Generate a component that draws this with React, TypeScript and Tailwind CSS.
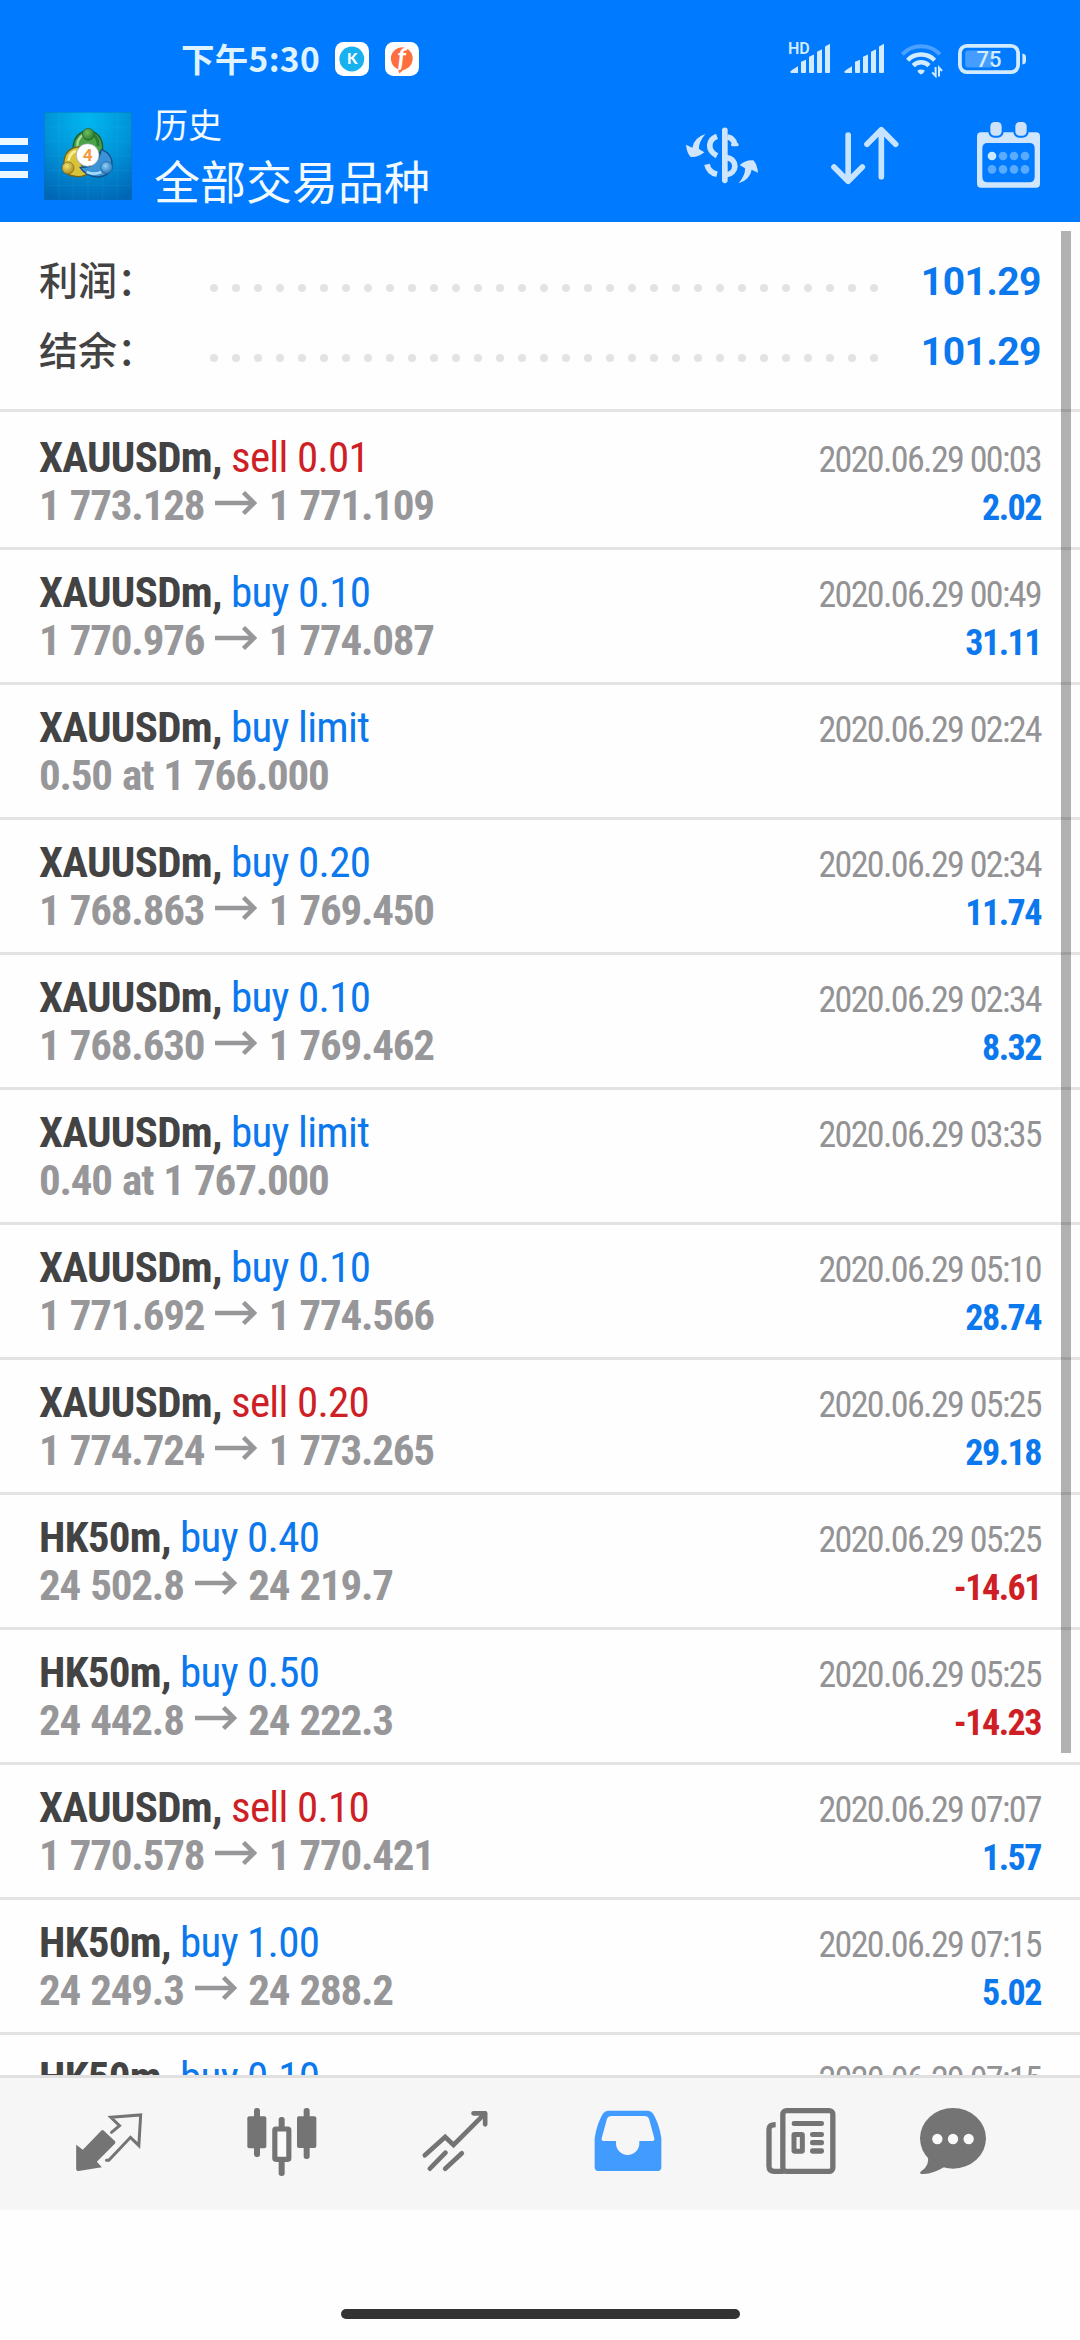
import React from "react";
import clsx from "clsx";

type Deal = {
  symbol: string;
  side: "buy" | "sell";
  volume: string;
  time: string;
  open?: string;
  close?: string;
  note?: string;
  profit?: string;
};

const deals: Deal[] = [
  { symbol: "XAUUSDm", side: "sell", volume: "0.01", time: "2020.06.29 00:03", open: "1 773.128", close: "1 771.109", profit: "2.02" },
  { symbol: "XAUUSDm", side: "buy", volume: "0.10", time: "2020.06.29 00:49", open: "1 770.976", close: "1 774.087", profit: "31.11" },
  { symbol: "XAUUSDm", side: "buy", volume: "limit", time: "2020.06.29 02:24", note: "0.50 at 1 766.000" },
  { symbol: "XAUUSDm", side: "buy", volume: "0.20", time: "2020.06.29 02:34", open: "1 768.863", close: "1 769.450", profit: "11.74" },
  { symbol: "XAUUSDm", side: "buy", volume: "0.10", time: "2020.06.29 02:34", open: "1 768.630", close: "1 769.462", profit: "8.32" },
  { symbol: "XAUUSDm", side: "buy", volume: "limit", time: "2020.06.29 03:35", note: "0.40 at 1 767.000" },
  { symbol: "XAUUSDm", side: "buy", volume: "0.10", time: "2020.06.29 05:10", open: "1 771.692", close: "1 774.566", profit: "28.74" },
  { symbol: "XAUUSDm", side: "sell", volume: "0.20", time: "2020.06.29 05:25", open: "1 774.724", close: "1 773.265", profit: "29.18" },
  { symbol: "HK50m", side: "buy", volume: "0.40", time: "2020.06.29 05:25", open: "24 502.8", close: "24 219.7", profit: "-14.61" },
  { symbol: "HK50m", side: "buy", volume: "0.50", time: "2020.06.29 05:25", open: "24 442.8", close: "24 222.3", profit: "-14.23" },
  { symbol: "XAUUSDm", side: "sell", volume: "0.10", time: "2020.06.29 07:07", open: "1 770.578", close: "1 770.421", profit: "1.57" },
  { symbol: "HK50m", side: "buy", volume: "1.00", time: "2020.06.29 07:15", open: "24 249.3", close: "24 288.2", profit: "5.02" },
  { symbol: "HK50m", side: "buy", volume: "0.10", time: "2020.06.29 07:15" },
];

const summary = [
  { label: "利润：", value: "101.29" },
  { label: "结余：", value: "101.29" },
];

/* ---------- status bar ---------- */

const SignalBars = ({ hd }: { hd?: boolean }) => (
  <svg className="overflow-visible" width="42" height="32" viewBox="0 0 42 32" fill="#d2ebff">
    <path d="M2.5 31Q1 31 1.3 29.6Q1.6 28.6 9 24.2V31Z" />
    <path d="M12 19.8L17 17.8V30Q17 31 16 31H13Q12 31 12 30Z" />
    <path d="M20 14.8L25 12.4V30Q25 31 24 31H21Q20 31 20 30Z" />
    <path d="M28 9.8L33 7.2V30Q33 31 32 31H29Q28 31 28 30Z" />
    <path d="M36 4.4L41 1.8V30Q41 31 40 31H37Q36 31 36 30Z" />
    {hd && (
      <text x="-1" y="12" fontSize="16" fontWeight="600" fontFamily="Roboto, sans-serif">
        HD
      </text>
    )}
  </svg>
);

const WifiIcon = () => (
  <svg width="43" height="34" viewBox="0 0 43 34" fill="none" stroke="#d2ebff">
    <path d="M2.3 10.3A26 26 0 0 1 40 10.3" stroke="#4ba1ff" strokeWidth="4" />
    <path d="M7.6 16.2A19 19 0 0 1 34.6 16.2" strokeWidth="4.4" />
    <path d="M13.2 21.6A11 11 0 0 1 29 21.6" strokeWidth="4.4" />
    <path d="M17.4 26.6Q21 24.4 24.8 26.6Q24.4 29 21 30.6Q17.8 29 17.4 26.6Z" fill="#d2ebff" stroke="none" />
    <path d="M35.6 23V32L32.2 28.4M39 32.6V23.6L42 27" strokeWidth="2" />
  </svg>
);

const BatteryIcon = () => (
  <svg width="68" height="30" viewBox="0 0 68 30">
    <rect x="1.9" y="1.9" width="58.2" height="26.2" rx="7" fill="none" stroke="#d2ebff" strokeWidth="3.8" />
    <rect x="7.2" y="6.6" width="28" height="17" rx="3" fill="#459dff" />
    <path d="M64.4 9.5Q68 10 68 13V17Q68 20 64.4 20.5Z" fill="#d2ebff" />
    <text x="31" y="23.4" textAnchor="middle" fontSize="22" fontWeight="500" fontFamily="Roboto, sans-serif" fill="#d2ebff">
      75
    </text>
  </svg>
);

const StatusBar = () => (
  <div className="flex h-[90px] items-start justify-between pt-[42px] pr-[54px] pl-[181px]">
    <div className="flex h-[34px] items-center">
      <span className="-mt-[3px] w-[138px] font-['Noto_Sans_CJK_SC',sans-serif] text-[33.5px] leading-[50px] font-bold tracking-[0.3px] whitespace-nowrap text-[#dff3ff]">
        下午5:30
      </span>
      <svg className="ml-4" width="34" height="34" viewBox="0 0 34 34">
        <rect width="34" height="34" rx="8.5" fill="#fff" />
        <circle cx="16.8" cy="17" r="12.4" fill="#17b1f0" />
        <text x="17.2" y="22.4" textAnchor="middle" fontSize="15" fontWeight="900" fontFamily="Lato, sans-serif" fill="#fff">
          K
        </text>
      </svg>
      <svg className="ml-4 overflow-visible" width="34" height="34" viewBox="0 0 34 34">
        <rect width="34" height="34" rx="8.5" fill="#fff" />
        <path d="M17 5.2A11.4 11.4 0 0 1 21 27Q17.4 28 14.4 31.4L13 27.2A11.4 11.4 0 0 1 17 5.2Z" fill="#ff6e3f" />
        <text x="16.6" y="25" textAnchor="middle" fontSize="26" fontStyle="italic" fontWeight="700" fontFamily="Lato, sans-serif" fill="#fff">
          f
        </text>
      </svg>
    </div>
    <div className="flex items-start">
      <SignalBars hd />
      <div className="ml-3">
        <SignalBars />
      </div>
      <div className="mt-0.5 ml-[15px]">
        <WifiIcon />
      </div>
      <div className="mt-0.5 ml-[15px]">
        <BatteryIcon />
      </div>
    </div>
  </div>
);

/* ---------- toolbar ---------- */

const AppLogo = () => (
  <svg width="88" height="88" viewBox="0 0 264 264">
    <defs>
      <radialGradient id="sky" cx="0.5" cy="0.1" r="0.95">
        <stop offset="0" stopColor="#00b6f0" />
        <stop offset="0.5" stopColor="#0094d9" />
        <stop offset="1" stopColor="#0067b6" />
      </radialGradient>
      <radialGradient id="green" cx="0.4" cy="0.35" r="0.7">
        <stop offset="0" stopColor="#6fbf5e" />
        <stop offset="1" stopColor="#25742c" />
      </radialGradient>
      <radialGradient id="gold" cx="0.4" cy="0.35" r="0.7">
        <stop offset="0" stopColor="#f0e070" />
        <stop offset="1" stopColor="#a8891c" />
      </radialGradient>
      <radialGradient id="blue" cx="0.4" cy="0.35" r="0.7">
        <stop offset="0" stopColor="#8fd0f8" />
        <stop offset="1" stopColor="#1d6fb4" />
      </radialGradient>
    </defs>
    <rect width="264" height="264" fill="url(#sky)" />
    <path
      d="M45 0V264M88 0V264M132 0V264M176 0V264M220 0V264M0 45H264M0 88H264M0 132H264M0 176H264M0 220H264"
      stroke="#3fb8e8"
      strokeOpacity="0.2"
      strokeWidth="2"
    />
    <g strokeLinejoin="round">
      <path d="M88 122Q84 78 112 62Q133 48 156 64Q182 82 174 130Q150 100 134 100Q112 102 88 122Z" fill="#4da347" stroke="#1e5f2c" strokeWidth="4" />
      <path d="M100 108Q98 80 118 68" fill="none" stroke="#a9db9a" strokeWidth="7" />
      <path d="M148 68Q164 80 162 102" fill="none" stroke="#2c7d33" strokeWidth="9" />
      <path d="M104 104Q66 110 61 142Q52 186 88 192Q116 198 134 184Q104 168 104 104Z" fill="#d8c33a" stroke="#756414" strokeWidth="4" />
      <path d="M74 146Q76 124 96 116" fill="none" stroke="#f6ee9a" strokeWidth="8" />
      <path d="M172 112Q206 126 204 158Q200 192 164 195Q128 196 108 166Q160 170 172 112Z" fill="#3b93d6" stroke="#174f87" strokeWidth="4" />
      <path d="M128 180Q150 190 172 180" fill="none" stroke="#a8dafa" strokeWidth="8" />
    </g>
    <circle cx="133" cy="67" r="18" fill="url(#green)" stroke="#1f642c" strokeWidth="2" />
    <circle cx="72" cy="168" r="18" fill="url(#gold)" stroke="#75621a" strokeWidth="2" />
    <circle cx="188" cy="167" r="18" fill="url(#blue)" stroke="#1b5d9c" strokeWidth="2" />
    <circle cx="131" cy="129" r="34" fill="#fff" stroke="#9aa3a8" strokeWidth="2" />
    <text x="131" y="147" textAnchor="middle" fontSize="52" fontWeight="700" fontFamily="Roboto, sans-serif" fill="#f29a3f">
      4
    </text>
    <rect x="1" y="1" width="262" height="262" fill="none" stroke="#0a6cc0" strokeOpacity="0.6" strokeWidth="2" />
  </svg>
);

const CurrencyIcon = () => (
  <svg width="72" height="57" viewBox="48 288 216 171" fill="none" stroke="#cfe5fb" strokeWidth="17">
    <path d="M164.5 298V448" strokeLinecap="round" />
    <path d="M141 316C114 326 110 358 141 374" />
    <path d="M172 318Q191 321 195 341" />
    <path d="M188 341H201" strokeWidth="10" strokeLinecap="round" />
    <path d="M111 400Q116 424 141 430" />
    <path d="M168 380C205 384 202 428 168 432" />
    <g fill="#cfe5fb" stroke="none">
      <path d="M106 309Q72 320 67 350L48 341Q50 365 62 378Q85 380 103 364L87 354Q85 335 106 309Z" />
      <path
        transform="rotate(180 156 383)"
        d="M106 309Q72 320 67 350L48 341Q50 365 62 378Q85 380 103 364L87 354Q85 335 106 309Z"
      />
    </g>
  </svg>
);

const SortIcon = () => (
  <svg
    width="68"
    height="59"
    viewBox="484 288 204 177"
    fill="none"
    stroke="#c6e4ff"
    strokeWidth="17"
    strokeLinecap="round"
    strokeLinejoin="round"
  >
    <path d="M535.5 315V450M493 411L535.5 454L578 411" />
    <path d="M635 303V440M592 343L635 299L678 343" />
  </svg>
);

const CalendarIcon = () => (
  <svg width="63" height="66" viewBox="921 275 189 198">
    <path
      fillRule="evenodd"
      fill="#cfe6fc"
      d="M933 306H1098Q1110 306 1110 318V460Q1110 472 1098 472H933Q921 472 921 460V318Q921 306 933 306ZM953 338Q937 338 937 354V440Q937 456 953 456H1078Q1094 456 1094 440V354Q1094 338 1078 338Z"
    />
    <rect x="955" y="271" width="46" height="51" rx="18" fill="#007aff" />
    <rect x="1030" y="271" width="46" height="51" rx="18" fill="#007aff" />
    <rect x="961" y="275" width="34" height="41" rx="13" fill="#cfe2f8" />
    <rect x="1036" y="275" width="34" height="41" rx="13" fill="#cfe2f8" />
    {[377, 417].map((cy) =>
      [966, 999, 1032, 1065].map((cx) => (
        <circle key={`${cx}-${cy}`} cx={cx} cy={cy} r="13" fill={cx === 966 && cy === 377 ? "#cdeaff" : "#59abff"} />
      )),
    )}
  </svg>
);

const Toolbar = () => (
  <div className="flex h-[132px] items-center pr-10">
    <button className="mt-1 flex w-7 flex-col gap-[9px]">
      <span className="h-[7.5px] w-full bg-[#ecf7ff]" />
      <span className="h-[7.5px] w-full bg-[#ecf7ff]" />
      <span className="h-[7.5px] w-full bg-[#ecf7ff]" />
    </button>
    <div className="ml-4">
      <AppLogo />
    </div>
    <div className="-mt-[5px] ml-[22px] flex flex-1 flex-col font-['Noto_Sans_CJK_SC',sans-serif] text-[#f2faff]">
      <span className="text-[34px] leading-[50px]">历史</span>
      <span className="text-[46px] leading-[60px]">全部交易品种</span>
    </div>
    <div className="-mt-[2px] flex items-center">
      <CurrencyIcon />
      <div className="ml-[73px]">
        <SortIcon />
      </div>
      <div className="ml-[78px]">
        <CalendarIcon />
      </div>
    </div>
  </div>
);

/* ---------- history list ---------- */

const DottedLine = () => (
  <div className="mt-[41px] flex w-[668px] items-center justify-between self-start">
    {Array.from({ length: 31 }, (_, i) => (
      <span key={i} className="size-[7.5px] rounded-full bg-[#e3e3e3]" />
    ))}
  </div>
);

const ArrowRight = () => (
  <svg
    className="mx-px inline-block align-baseline"
    width="42"
    height="29"
    viewBox="0 0 42 29"
    fill="none"
    stroke="#97979a"
    strokeWidth="4.5"
  >
    <path d="M0 12H40M28.500 1.500L39 12L28.500 22.500" />
  </svg>
);

const DealRow = ({ deal, first }: { deal: Deal; first: boolean }) => {
  const negative = deal.profit?.startsWith("-");
  return (
    <li
      className={clsx(
        "shrink-0 border-b-[3px] border-[#e3e3e3] pr-[39px] pl-[39px] font-['Roboto_Condensed',Roboto,sans-serif]",
        first ? "h-[138px] pt-[21px]" : "h-[135px] pt-[18px]",
      )}
    >
      <div className="flex h-12 items-baseline justify-between leading-[48px]">
        <span className="text-[43px] tracking-[-0.7px]">
          <span className="font-bold text-[#434343]">{deal.symbol}, </span>
          <span className={deal.side === "sell" ? "text-[#cf1f26]" : "text-[#0b78ee]"}>
            {deal.side} {deal.volume}
          </span>
        </span>
        <span className="text-[36px] tracking-[-1.65px] text-[#939395]">{deal.time}</span>
      </div>
      <div className="flex h-12 items-baseline justify-between leading-[48px] font-bold">
        <span className="text-[43px] tracking-[-1.2px] text-[#97979a] [word-spacing:1.5px]">
          {deal.note}
          {deal.open && (
            <>
              {deal.open} <ArrowRight /> {deal.close}
            </>
          )}
        </span>
        <span className={clsx("text-[36px] tracking-[-1.5px]", negative ? "text-[#cf1f26]" : "text-[#0b78ee]")}>
          {deal.profit}
        </span>
      </div>
    </li>
  );
};

/* ---------- bottom tabs ---------- */

const QuotesIcon = () => (
  <svg width="72" height="72" viewBox="37.5 48 216 216">
    <path
      d="M47 164L67 179L122 122Q126 118 130 122L163 153Q167 157 163 161L109 215L124 232L54 243Q47 244 47 237Z"
      fill="#747474"
    />
    <path
      d="M138 211L145 211L210 142L235 167L240.5 75L151 82L177 107L153 127"
      fill="none"
      stroke="#747474"
      strokeWidth="9"
      strokeLinecap="round"
    />
  </svg>
);

const ChartIcon = () => (
  <svg width="72" height="72" viewBox="556 48 216 216" fill="#747474">
    <rect x="580" y="54" width="18" height="147" rx="8" />
    <rect x="560" y="79" width="57" height="96" rx="6" />
    <rect x="729" y="54" width="18" height="153" rx="8" />
    <rect x="709" y="79" width="58" height="95" rx="6" />
    <rect x="654" y="81" width="18" height="40" rx="8" />
    <rect x="654" y="206" width="18" height="52" rx="8" />
    <rect x="642.5" y="117" width="42" height="91" rx="3" fill="#fafafa" stroke="#747474" strokeWidth="15.5" />
  </svg>
);

const TradeIcon = () => (
  <svg
    width="72"
    height="72"
    viewBox="1074.5 48 216 216"
    fill="none"
    stroke="#747474"
    strokeWidth="14"
    strokeLinecap="round"
    strokeLinejoin="round"
  >
    <path d="M1092 196L1153 141L1178 165L1272 71" strokeLinejoin="miter" />
    <path d="M1238 70H1273V103" />
    <path d="M1107 236L1154 188M1153 236L1203 190" />
  </svg>
);

const HistoryIcon = () => (
  <svg width="72" height="72" viewBox="35 48 216 216" fill="#429bff">
    <path
      fillRule="evenodd"
      d="M82 62H204Q213 63 219 72Q237 103 243 145V232Q243 243 232 243H54Q43 243 43 232V145Q49 103 67 72Q73 63 82 62ZM92 78Q83 79 80 86L64 145Q62 152 68 153H107V160A35 35 0 0 0 177 160V153H217Q223 153 222 145L206 86Q203 79 194 78Z"
    />
  </svg>
);

const NewsIcon = () => (
  <svg width="72" height="72" viewBox="556 48 216 216" fill="#747474">
    <path d="M588 104Q568 104 568 118V228Q568 244 584 244H612" fill="none" stroke="#747474" strokeWidth="16" />
    <rect x="609.5" y="62" width="150" height="182" rx="11" fill="none" stroke="#747474" strokeWidth="16" />
    <rect x="636" y="93" width="97" height="15" rx="7" />
    <rect x="643" y="133.5" width="25" height="50" rx="2" fill="none" stroke="#747474" strokeWidth="15" />
    <rect x="691" y="126" width="42" height="15" rx="7" />
    <rect x="691" y="150" width="42" height="16" rx="7" />
    <rect x="691" y="175" width="42" height="16" rx="7" />
  </svg>
);

const ChatIcon = () => (
  <svg width="72" height="72" viewBox="1011 48 216 216" fill="#747474">
    <ellipse cx="1119" cy="145" rx="99" ry="91" />
    <path d="M1042 194Q1052 226 1022 245Q1016 252 1030 252Q1062 250 1094 230Z" />
    <circle cx="1072" cy="147" r="15.5" fill="#fafafa" />
    <circle cx="1119" cy="147" r="15.5" fill="#fafafa" />
    <circle cx="1166" cy="147" r="15.5" fill="#fafafa" />
  </svg>
);

const App = () => {
  return (
    <div className="flex h-[2340px] w-[1080px] flex-col overflow-hidden bg-[#fefefe]">
      {/* Header */}
      <header className="h-[222px] shrink-0 bg-[#007aff]">
        <StatusBar />
        <Toolbar />
      </header>

      {/* History */}
      <main className="relative flex h-[1853px] shrink-0 flex-col overflow-hidden">
        <section className="h-[190px] shrink-0 border-b-[3px] border-[#e3e3e3] pt-[21px] pr-[39px] pl-[39px]">
          {summary.map((item) => (
            <div key={item.label} className="flex h-[70px] items-baseline leading-[70px]">
              <span className="w-[171px] font-['Noto_Sans_CJK_SC',sans-serif] text-[39px] font-medium text-[#434343]">
                {item.label}
              </span>
              <DottedLine />
              <span className="ml-auto font-['Roboto',sans-serif] text-[39px] font-bold tracking-[-0.5px] text-[#0b78ee]">
                {item.value}
              </span>
            </div>
          ))}
        </section>
        <ul className="flex flex-col">
          {deals.map((deal, i) => (
            <DealRow key={i} deal={deal} first={i === 0} />
          ))}
        </ul>
        {/* scroll thumb */}
        <div className="absolute top-[9px] right-[9px] h-[1522px] w-[10px] bg-black/30" />
      </main>

      {/* Tabs */}
      <nav className="flex h-[135px] shrink-0 items-start gap-[101px] border-t-[3px] border-[#e0e0e0] bg-[#f6f6f6] pt-7 pl-[72.5px]">
        <QuotesIcon />
        <ChartIcon />
        <TradeIcon />
        <HistoryIcon />
        <NewsIcon />
        <div className="-ml-[21px]">
          <ChatIcon />
        </div>
      </nav>
      <div className="flex flex-1 items-end justify-center pb-[21px]">
        <div className="h-2.5 w-[399px] rounded-full bg-[#333333]" />
      </div>
    </div>
  );
};

export default App;
